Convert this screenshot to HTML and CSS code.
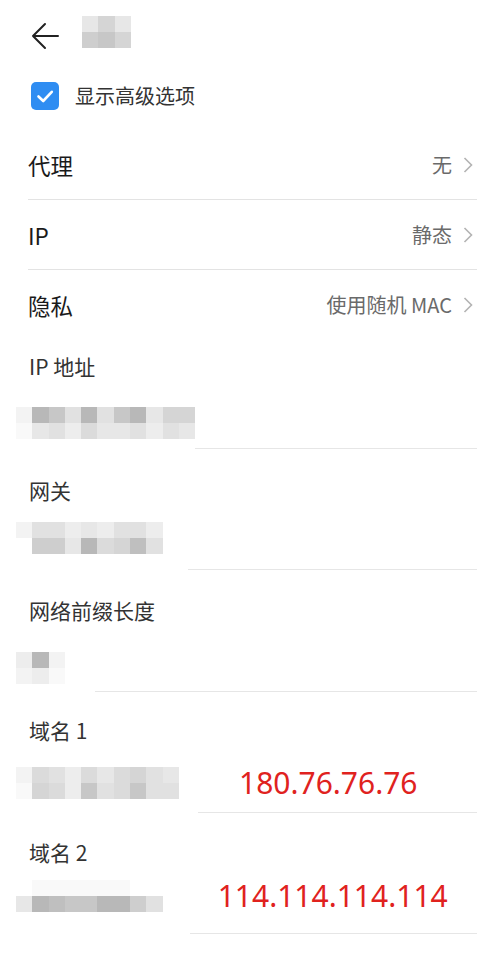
FILE: index.html
```html
<!DOCTYPE html>
<html lang="zh-CN">
<head>
<meta charset="utf-8">
<title>WLAN 高级选项</title>
<link rel="stylesheet" href="styles.css">
</head>
<body>
<header class="header">
  <svg class="back" viewBox="0 0 28 28" width="28" height="28" aria-hidden="true">
    <path d="M2 14 H27 M14 2 L2 14 L14 26" fill="none" stroke="#222" stroke-width="2" stroke-linecap="round" stroke-linejoin="round"/>
  </svg>
  <div class="mosaic mosaic--title">
    <div class="mrow"><span class="c d"></span><span class="c g"></span><span class="c d"></span></div>
    <div class="mrow"><span class="c h"></span><span class="c i"></span><span class="c g"></span></div>
  </div>
</header>

<label class="option">
  <span class="checkbox">
    <svg viewBox="0 0 28 28" width="28" height="28" aria-hidden="true">
      <polyline points="7.5,14.5 12.2,19 20.8,9.8" fill="none" stroke="#fff" stroke-width="2.6" stroke-linecap="round" stroke-linejoin="round"/>
    </svg>
  </span>
  <span class="option-text">显示高级选项</span>
</label>

<div class="list">
  <div class="row">
    <span class="row-title">代理</span>
    <span class="row-value">无<svg class="chev" viewBox="0 0 10 16" width="10" height="16"><polyline points="1.5,1 8.5,8 1.5,15" fill="none" stroke="#b3b3b3" stroke-width="1.6"/></svg></span>
  </div>
  <div class="row">
    <span class="row-title">IP</span>
    <span class="row-value">静态<svg class="chev" viewBox="0 0 10 16" width="10" height="16"><polyline points="1.5,1 8.5,8 1.5,15" fill="none" stroke="#b3b3b3" stroke-width="1.6"/></svg></span>
  </div>
  <div class="row row--last">
    <span class="row-title">隐私</span>
    <span class="row-value">使用随机 MAC<svg class="chev" viewBox="0 0 10 16" width="10" height="16"><polyline points="1.5,1 8.5,8 1.5,15" fill="none" stroke="#b3b3b3" stroke-width="1.6"/></svg></span>
  </div>
</div>

<div class="fields">
  <div class="field field--ip">
    <div class="field-label">IP 地址</div>
    <div class="field-value">
      <div class="mosaic">
        <div class="mrow"><span class="c b"></span><span class="c k"></span><span class="c i"></span><span class="c e"></span><span class="c k"></span><span class="c e"></span><span class="c i"></span><span class="c k"></span><span class="c d"></span><span class="c g"></span><span class="c g"></span></div>
        <div class="mrow"><span class="c a"></span><span class="c d"></span><span class="c e"></span><span class="c c2"></span><span class="c f"></span><span class="c d"></span><span class="c d"></span><span class="c e"></span><span class="c c2"></span><span class="c e"></span><span class="c d"></span></div>
      </div>
    </div>
    <div class="rule"></div>
  </div>

  <div class="field field--gw">
    <div class="field-label">网关</div>
    <div class="field-value">
      <div class="mosaic">
        <div class="mrow"><span class="c b"></span><span class="c e"></span><span class="c e"></span><span class="c c2"></span><span class="c d"></span><span class="c c2"></span><span class="c e"></span><span class="c e"></span><span class="c c2"></span></div>
        <div class="mrow"><span class="c w"></span><span class="c h"></span><span class="c h"></span><span class="c d"></span><span class="c k"></span><span class="c f"></span><span class="c g"></span><span class="c j"></span><span class="c e"></span></div>
      </div>
    </div>
    <div class="rule"></div>
  </div>

  <div class="field field--prefix">
    <div class="field-label">网络前缀长度</div>
    <div class="field-value">
      <div class="mosaic">
        <div class="mrow"><span class="c c2"></span><span class="c k"></span><span class="c b"></span></div>
        <div class="mrow"><span class="c b"></span><span class="c c2"></span><span class="c a"></span></div>
      </div>
    </div>
    <div class="rule"></div>
  </div>

  <div class="field field--dns1">
    <div class="field-label">域名 1</div>
    <div class="field-value">
      <div class="mosaic">
        <div class="mrow"><span class="c b"></span><span class="c f"></span><span class="c e"></span><span class="c c2"></span><span class="c f"></span><span class="c d"></span><span class="c f"></span><span class="c g"></span><span class="c e"></span><span class="c d"></span></div>
        <div class="mrow"><span class="c a"></span><span class="c g"></span><span class="c f"></span><span class="c c2"></span><span class="c i"></span><span class="c e"></span><span class="c f"></span><span class="c i"></span><span class="c e"></span><span class="c e"></span></div>
      </div>
      <span class="note note--dns1">180.76.76.76</span>
    </div>
    <div class="rule"></div>
  </div>

  <div class="field field--dns2">
    <div class="field-label">域名 2</div>
    <div class="field-value">
      <div class="mosaic">
        <div class="mrow"><span class="c w"></span><span class="c a"></span><span class="c a"></span><span class="c a"></span><span class="c a"></span><span class="c a"></span><span class="c a"></span><span class="c w"></span><span class="c w"></span></div>
        <div class="mrow"><span class="c d"></span><span class="c k"></span><span class="c j"></span><span class="c i"></span><span class="c i"></span><span class="c k"></span><span class="c k"></span><span class="c h"></span><span class="c e"></span></div>
      </div>
      <span class="note note--dns2">114.114.114.114</span>
    </div>
    <div class="rule"></div>
  </div>
</div>
</body>
</html>
```

FILE: styles.css
```css
* { box-sizing: border-box; }

html, body {
  margin: 0;
  padding: 0;
  background: #ffffff;
}

body {
  width: 500px;
  font-family: "Noto Sans CJK SC", "Noto Sans", sans-serif;
  color: #1a1a1a;
}

/* header */
.header {
  display: flex;
  align-items: flex-start;
  height: 82px;
  padding: 16px 0 0 31px;
}

.back {
  display: block;
  margin-top: 6px;
}

.mosaic--title {
  margin-left: 23px;
}

/* mosaic blocks */
.mosaic {
  display: flex;
  flex-direction: column;
  flex: none;
}

.mrow {
  display: flex;
}

.c {
  display: block;
  width: 16.3px;
  height: 16px;
}

.w  { background: #ffffff; }
.a  { background: #f9f9f9; }
.b  { background: #f3f3f3; }
.c2 { background: #ededed; }
.d  { background: #e7e7e7; }
.e  { background: #e1e1e1; }
.f  { background: #dbdbdb; }
.g  { background: #d5d5d5; }
.h  { background: #cecece; }
.i  { background: #c7c7c7; }
.j  { background: #bfbfbf; }
.k  { background: #b8b8b8; }

/* checkbox option */
.option {
  display: flex;
  align-items: center;
  height: 28px;
  margin: 0 0 20px 31px;
}

.checkbox {
  display: block;
  width: 28px;
  height: 28px;
  border-radius: 5px;
  background: #2f8df2;
}

.checkbox svg {
  display: block;
}

.option-text {
  margin-left: 16px;
  font-size: 20px;
  line-height: 28px;
  color: #333333;
}

/* list rows */
.list {
  margin: 0 23px 0 28px;
}

.row {
  display: flex;
  align-items: center;
  justify-content: space-between;
  height: 70px;
  border-bottom: 1px solid #e3e3e3;
}

.row--last {
  border-bottom: none;
}

.row-title {
  font-size: 22.5px;
  color: #1a1a1a;
  line-height: 30px;
}

.row-value {
  display: flex;
  align-items: center;
  font-size: 20px;
  color: #6a6a6a;
  line-height: 28px;
}

.chev {
  display: block;
  margin-left: 11px;
  margin-right: 4px;
}

/* fields */
.fields {
  margin: 0 23px 0 16px;
}

.field-label {
  margin-left: 13px;
  font-size: 21px;
  line-height: 24px;
  color: #333333;
}

.field-value {
  display: flex;
  align-items: center;
}

.rule {
  height: 1px;
  background: #e6e6e6;
}

.note {
  font-family: "Noto Sans", sans-serif;
  font-size: 30px;
  line-height: 32px;
  color: #e0221e;
}

.note--dns1 { margin-left: 60px; }
.note--dns2 { margin-left: 55px; }

.field--ip { padding-top: 14px; }
.field--ip .field-value { margin-top: 29px; }
.field--ip .rule { margin: 9px 0 0 179px; }

.field--gw { padding-top: 29px; }
.field--gw .field-value { margin-top: 20px; }
.field--gw .rule { margin: 15px 0 0 172px; }

.field--prefix { padding-top: 28px; }
.field--prefix .field-value { margin-top: 30px; }
.field--prefix .rule { margin: 7px 0 0 79px; }

.field--dns1 { padding-top: 26px; }
.field--dns1 .field-value { margin-top: 25px; }
.field--dns1 .rule { margin: 13px 0 0 182px; }

.field--dns2 { padding-top: 27px; }
.field--dns2 .field-value { margin-top: 16px; }
.field--dns2 .rule { margin: 21px 0 0 174px; }
```
